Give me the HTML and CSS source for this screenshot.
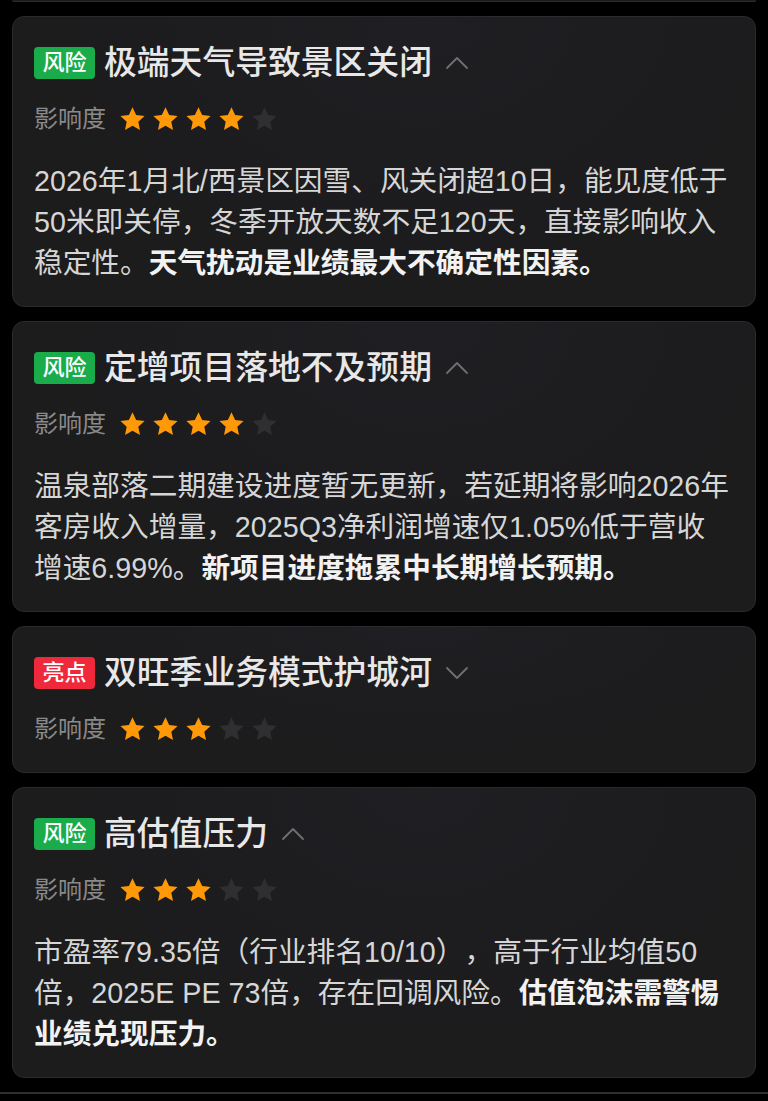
FILE: index.html
```html
<!DOCTYPE html>
<html lang="zh-CN">
<head>
<meta charset="utf-8">
<title>风险与亮点</title>
<link rel="stylesheet" href="styles.css">
</head>
<body>
<div class="stub"></div>

<section class="card">
  <div class="head">
    <span class="badge risk">风险</span>
    <h2 class="title">极端天气导致景区关闭</h2>
    <svg class="chev" viewBox="0 0 24 14" width="24" height="14"><polyline points="2,12 12,2 22,12"/></svg>
  </div>
  <div class="rating">
    <span class="label">影响度</span>
    <div class="stars">
      <svg class="star on" viewBox="0 0 24 24"><path d="M12 1.8l3 6.4 7 .8-5.2 4.8 1.4 6.9L12 17.2l-6.2 3.5 1.4-6.9L2 9l7-.8z"/></svg>
      <svg class="star on" viewBox="0 0 24 24"><path d="M12 1.8l3 6.4 7 .8-5.2 4.8 1.4 6.9L12 17.2l-6.2 3.5 1.4-6.9L2 9l7-.8z"/></svg>
      <svg class="star on" viewBox="0 0 24 24"><path d="M12 1.8l3 6.4 7 .8-5.2 4.8 1.4 6.9L12 17.2l-6.2 3.5 1.4-6.9L2 9l7-.8z"/></svg>
      <svg class="star on" viewBox="0 0 24 24"><path d="M12 1.8l3 6.4 7 .8-5.2 4.8 1.4 6.9L12 17.2l-6.2 3.5 1.4-6.9L2 9l7-.8z"/></svg>
      <svg class="star" viewBox="0 0 24 24"><path d="M12 1.8l3 6.4 7 .8-5.2 4.8 1.4 6.9L12 17.2l-6.2 3.5 1.4-6.9L2 9l7-.8z"/></svg>
    </div>
  </div>
  <p class="body">2026年1月北/西景区因雪、风关闭超10日，能见度低于50米即关停，冬季开放天数不足120天，直接影响收入稳定性。<strong>天气扰动是业绩最大不确定性因素。</strong></p>
</section>

<section class="card">
  <div class="head">
    <span class="badge risk">风险</span>
    <h2 class="title">定增项目落地不及预期</h2>
    <svg class="chev" viewBox="0 0 24 14" width="24" height="14"><polyline points="2,12 12,2 22,12"/></svg>
  </div>
  <div class="rating">
    <span class="label">影响度</span>
    <div class="stars">
      <svg class="star on" viewBox="0 0 24 24"><path d="M12 1.8l3 6.4 7 .8-5.2 4.8 1.4 6.9L12 17.2l-6.2 3.5 1.4-6.9L2 9l7-.8z"/></svg>
      <svg class="star on" viewBox="0 0 24 24"><path d="M12 1.8l3 6.4 7 .8-5.2 4.8 1.4 6.9L12 17.2l-6.2 3.5 1.4-6.9L2 9l7-.8z"/></svg>
      <svg class="star on" viewBox="0 0 24 24"><path d="M12 1.8l3 6.4 7 .8-5.2 4.8 1.4 6.9L12 17.2l-6.2 3.5 1.4-6.9L2 9l7-.8z"/></svg>
      <svg class="star on" viewBox="0 0 24 24"><path d="M12 1.8l3 6.4 7 .8-5.2 4.8 1.4 6.9L12 17.2l-6.2 3.5 1.4-6.9L2 9l7-.8z"/></svg>
      <svg class="star" viewBox="0 0 24 24"><path d="M12 1.8l3 6.4 7 .8-5.2 4.8 1.4 6.9L12 17.2l-6.2 3.5 1.4-6.9L2 9l7-.8z"/></svg>
    </div>
  </div>
  <p class="body">温泉部落二期建设进度暂无更新，若延期将影响2026年客房收入增量，2025Q3净利润增速仅1.05%低于营收增速6.99%。<strong>新项目进度拖累中长期增长预期。</strong></p>
</section>

<section class="card collapsed">
  <div class="head">
    <span class="badge good">亮点</span>
    <h2 class="title">双旺季业务模式护城河</h2>
    <svg class="chev" viewBox="0 0 24 14" width="24" height="14"><polyline points="2,2 12,12 22,2"/></svg>
  </div>
  <div class="rating">
    <span class="label">影响度</span>
    <div class="stars">
      <svg class="star on" viewBox="0 0 24 24"><path d="M12 1.8l3 6.4 7 .8-5.2 4.8 1.4 6.9L12 17.2l-6.2 3.5 1.4-6.9L2 9l7-.8z"/></svg>
      <svg class="star on" viewBox="0 0 24 24"><path d="M12 1.8l3 6.4 7 .8-5.2 4.8 1.4 6.9L12 17.2l-6.2 3.5 1.4-6.9L2 9l7-.8z"/></svg>
      <svg class="star on" viewBox="0 0 24 24"><path d="M12 1.8l3 6.4 7 .8-5.2 4.8 1.4 6.9L12 17.2l-6.2 3.5 1.4-6.9L2 9l7-.8z"/></svg>
      <svg class="star" viewBox="0 0 24 24"><path d="M12 1.8l3 6.4 7 .8-5.2 4.8 1.4 6.9L12 17.2l-6.2 3.5 1.4-6.9L2 9l7-.8z"/></svg>
      <svg class="star" viewBox="0 0 24 24"><path d="M12 1.8l3 6.4 7 .8-5.2 4.8 1.4 6.9L12 17.2l-6.2 3.5 1.4-6.9L2 9l7-.8z"/></svg>
    </div>
  </div>
</section>

<section class="card">
  <div class="head">
    <span class="badge risk">风险</span>
    <h2 class="title">高估值压力</h2>
    <svg class="chev" viewBox="0 0 24 14" width="24" height="14"><polyline points="2,12 12,2 22,12"/></svg>
  </div>
  <div class="rating">
    <span class="label">影响度</span>
    <div class="stars">
      <svg class="star on" viewBox="0 0 24 24"><path d="M12 1.8l3 6.4 7 .8-5.2 4.8 1.4 6.9L12 17.2l-6.2 3.5 1.4-6.9L2 9l7-.8z"/></svg>
      <svg class="star on" viewBox="0 0 24 24"><path d="M12 1.8l3 6.4 7 .8-5.2 4.8 1.4 6.9L12 17.2l-6.2 3.5 1.4-6.9L2 9l7-.8z"/></svg>
      <svg class="star on" viewBox="0 0 24 24"><path d="M12 1.8l3 6.4 7 .8-5.2 4.8 1.4 6.9L12 17.2l-6.2 3.5 1.4-6.9L2 9l7-.8z"/></svg>
      <svg class="star" viewBox="0 0 24 24"><path d="M12 1.8l3 6.4 7 .8-5.2 4.8 1.4 6.9L12 17.2l-6.2 3.5 1.4-6.9L2 9l7-.8z"/></svg>
      <svg class="star" viewBox="0 0 24 24"><path d="M12 1.8l3 6.4 7 .8-5.2 4.8 1.4 6.9L12 17.2l-6.2 3.5 1.4-6.9L2 9l7-.8z"/></svg>
    </div>
  </div>
  <p class="body">市盈率79.35倍（行业排名10/10），高于行业均值50倍，2025E PE 73倍，存在回调风险。<strong>估值泡沫需警惕业绩兑现压力。</strong></p>
</section>

<div class="bottom-line"></div>
</body>
</html>
```

FILE: styles.css
```css
* { box-sizing: border-box; }

html, body {
  margin: 0;
  padding: 0;
  background: #000;
}

body {
  font-family: "Liberation Sans", "Noto Sans CJK SC", sans-serif;
  color: #d8d8d8;
  text-spacing-trim: space-all;
}

.stub {
  height: 2px;
  margin: 0 12px 14px;
  background: #1c1c1e;
  border: 1px solid #2c2c2e;
  border-top: none;
  border-radius: 0 0 12px 12px;
}

.card {
  margin: 0 12px 14px 12px;
  background: radial-gradient(ellipse at 55% 0%, #1f1f23 0%, #1c1c1e 55%, #1c1c1c 100%);
  border: 1px solid #2b2b2d;
  border-radius: 12px;
  padding: 23px 25px 22px 21px;
}

.card.collapsed {
  padding-bottom: 25px;
}

.head {
  display: flex;
  align-items: center;
  height: 46px;
}

.badge {
  display: inline-flex;
  align-items: center;
  justify-content: center;
  height: 32px;
  width: 61px;
  border-radius: 4px;
  font-size: 22px;
  font-weight: 500;
  color: #fff;
  line-height: 1;
}

.badge.risk { background: #1aab4b; }
.badge.good { background: #f0283c; }

.title {
  margin: 0 0 0 9px;
  font-size: 32.8px;
  font-weight: 500;
  color: #e8e8e8;
  line-height: 46px;
  white-space: nowrap;
}

.chev {
  margin-left: 13px;
  fill: none;
  stroke: #6f6f6f;
  stroke-width: 1.8;
  stroke-linecap: round;
  stroke-linejoin: round;
}

.rating {
  display: flex;
  align-items: center;
  height: 36px;
  margin-top: 15px;
}

.label {
  font-size: 24px;
  color: #8a8a8a;
  line-height: 36px;
}

.stars {
  display: flex;
  gap: 4px;
  margin-left: 12px;
}

.star {
  width: 29px;
  height: 29px;
  fill: #2f2f31;
}

.star.on { fill: #ff9908; }

.body {
  margin: 24px 0 0;
  font-size: 28.7px;
  line-height: 41px;
  color: #d6d6d6;
}

.body strong {
  font-weight: 700;
  color: #f2f2f2;
}

.bottom-line {
  margin-top: 7px;
  height: 2px;
  background: #2e2e2e;
}
```
